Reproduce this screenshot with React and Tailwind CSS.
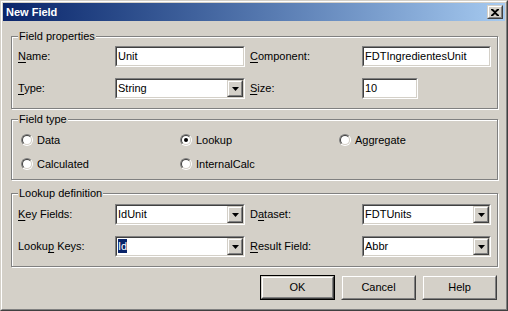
import React from "react";

const font = { fontFamily: '"Liberation Sans", Arial, sans-serif' };

function Sunken({ w, children }) {
  return (
    <div className={`h-[21px] ${w} border border-t-[#808080] border-l-[#808080] border-b-white border-r-white`}>
      <div className="h-full w-full border border-t-[#404040] border-l-[#404040] border-b-[#d4d0c8] border-r-[#d4d0c8] bg-white flex items-center">
        {children}
      </div>
    </div>
  );
}

function Raised({ className, children }) {
  return (
    <div className={`border border-t-[#d4d0c8] border-l-[#d4d0c8] border-b-[#404040] border-r-[#404040] ${className}`}>
      <div className="h-full w-full border border-t-white border-l-white border-b-[#808080] border-r-[#808080] bg-[#d4d0c8] flex items-center justify-center">
        {children}
      </div>
    </div>
  );
}

function Arrow() {
  return (
    <svg width="7" height="4" viewBox="0 0 7 4">
      <path d="M0 0H7L3.5 4Z" fill="#000" />
    </svg>
  );
}

function Edit({ w, text }) {
  return (
    <Sunken w={w}>
      <span className="pl-[1px] text-[11px] leading-none text-black">{text}</span>
    </Sunken>
  );
}

function Combo({ text, selected }) {
  return (
    <Sunken w="w-[130px]">
      <div className="flex-1 pl-[1px] text-[11px] leading-none text-black">
        {selected ? <span className="bg-[#0a246a] text-white py-[1px]">{text}</span> : text}
      </div>
      <Raised className="w-[16px] h-[17px]">
        <Arrow />
      </Raised>
    </Sunken>
  );
}

function Label({ pre, u, post, w }) {
  return (
    <div className={`${w} text-[11px] text-black leading-none`}>
      {pre}
      <span className="underline underline-offset-[2px]">{u}</span>
      {post}
    </div>
  );
}

function Group({ title, className, children }) {
  return (
    <div className={`relative border border-[#808080] shadow-[inset_1px_1px_0_#ffffff,1px_1px_0_#ffffff] ${className}`}>
      <span className="absolute left-[6px] top-[-7px] bg-[#d4d0c8] px-[1px] text-[11px] leading-[13px] text-black">
        {title}
      </span>
      {children}
    </div>
  );
}

function Radio({ label, checked }) {
  return (
    <div className="flex items-center h-[16px]">
      <div className="w-[12px] h-[12px] rounded-full border border-t-[#808080] border-l-[#808080] border-b-white border-r-white">
        <div className="w-full h-full rounded-full border border-t-[#404040] border-l-[#404040] border-b-[#d4d0c8] border-r-[#d4d0c8] bg-white flex items-center justify-center">
          {checked && <div className="w-[4px] h-[4px] rounded-full bg-black" />}
        </div>
      </div>
      <span className="ml-[4px] text-[11px] leading-none text-black">{label}</span>
    </div>
  );
}

function Button({ label, def }) {
  const inner = (
    <Raised className={def ? "w-[73px] h-[23px]" : "w-[75px] h-[25px]"}>
      <span className="text-[11px] leading-none text-black">{label}</span>
    </Raised>
  );
  if (def) return <div className="border border-black w-[75px] h-[25px]">{inner}</div>;
  return inner;
}

export default function App() {
  return (
    <div style={font} className="w-[508px] h-[311px] overflow-hidden">
      <div className="w-full h-full border border-t-[#d4d0c8] border-l-[#d4d0c8] border-b-[#404040] border-r-[#404040]">
        <div className="w-full h-full border border-t-white border-l-white border-b-[#808080] border-r-[#808080]">
          <div className="w-full h-full border border-[#d4d0c8] bg-[#d4d0c8] flex flex-col">
            {/* title bar */}
            <div className="h-[18px] bg-gradient-to-r from-[#0a246a] to-[#a6caf0] flex items-center pl-[3px] pr-[2px]">
              <span className="flex-1 text-[11px] font-bold text-white leading-none">New Field</span>
              <Raised className="w-[16px] h-[14px]">
                <svg width="8" height="7" viewBox="0 0 8 7">
                  <path d="M0 0h2l2 2 2-2h2v1L5 3.5 8 6v1H6L4 5 2 7H0V6l3-2.5L0 1z" fill="#000" />
                </svg>
              </Raised>
            </div>

            <div className="flex flex-col pl-[8px] pr-[7px]">
              {/* Field properties */}
              <Group title="Field properties" className="mt-[15px] h-[73px] pt-[9px] pl-[6px]">
                <div className="flex items-center h-[21px]">
                  <Label w="w-[97px]" u="N" post="ame:" />
                  <Edit w="w-[130px]" text="Unit" />
                  <Label w="w-[112px] ml-[5px]" u="C" post="omponent:" />
                  <Edit w="w-[129px]" text="FDTIngredientesUnit" />
                </div>
                <div className="flex items-center h-[21px] mt-[11px]">
                  <Label w="w-[97px]" u="T" post="ype:" />
                  <Combo text="String" />
                  <Label w="w-[112px] ml-[5px]" u="S" post="ize:" />
                  <Edit w="w-[56px]" text="10" />
                </div>
              </Group>

              {/* Field type */}
              <Group title="Field type" className="mt-[10px] h-[61px] pt-[12px] pl-[9px]">
                <div className="grid grid-cols-[159px_159px_auto] gap-y-[8px]">
                  <Radio label="Data" />
                  <Radio label="Lookup" checked />
                  <Radio label="Aggregate" />
                  <Radio label="Calculated" />
                  <Radio label="InternalCalc" />
                </div>
              </Group>

              {/* Lookup definition */}
              <Group title="Lookup definition" className="mt-[13px] h-[74px] pt-[10px] pl-[6px]">
                <div className="flex items-center h-[21px]">
                  <Label w="w-[97px]" u="K" post="ey Fields:" />
                  <Combo text="IdUnit" />
                  <Label w="w-[112px] ml-[5px]" pre="D" u="a" post="taset:" />
                  <div className="w-[129px]">
                    <Sunken w="w-[129px]">
                      <div className="flex-1 pl-[1px] text-[11px] leading-none text-black">FDTUnits</div>
                      <Raised className="w-[16px] h-[17px]"><Arrow /></Raised>
                    </Sunken>
                  </div>
                </div>
                <div className="flex items-center h-[21px] mt-[11px]">
                  <Label w="w-[97px]" pre="Looku" u="p" post=" Keys:" />
                  <Combo text="Id" selected />
                  <Label w="w-[112px] ml-[5px]" u="R" post="esult Field:" />
                  <Sunken w="w-[129px]">
                    <div className="flex-1 pl-[1px] text-[11px] leading-none text-black">Abbr</div>
                    <Raised className="w-[16px] h-[17px]"><Arrow /></Raised>
                  </Sunken>
                </div>
              </Group>

              {/* Buttons */}
              <div className="mt-[8px] flex justify-end gap-[6px] mr-[1px]">
                <Button label="OK" def />
                <Button label="Cancel" />
                <Button label="Help" />
              </div>
            </div>
          </div>
        </div>
      </div>
    </div>
  );
}
